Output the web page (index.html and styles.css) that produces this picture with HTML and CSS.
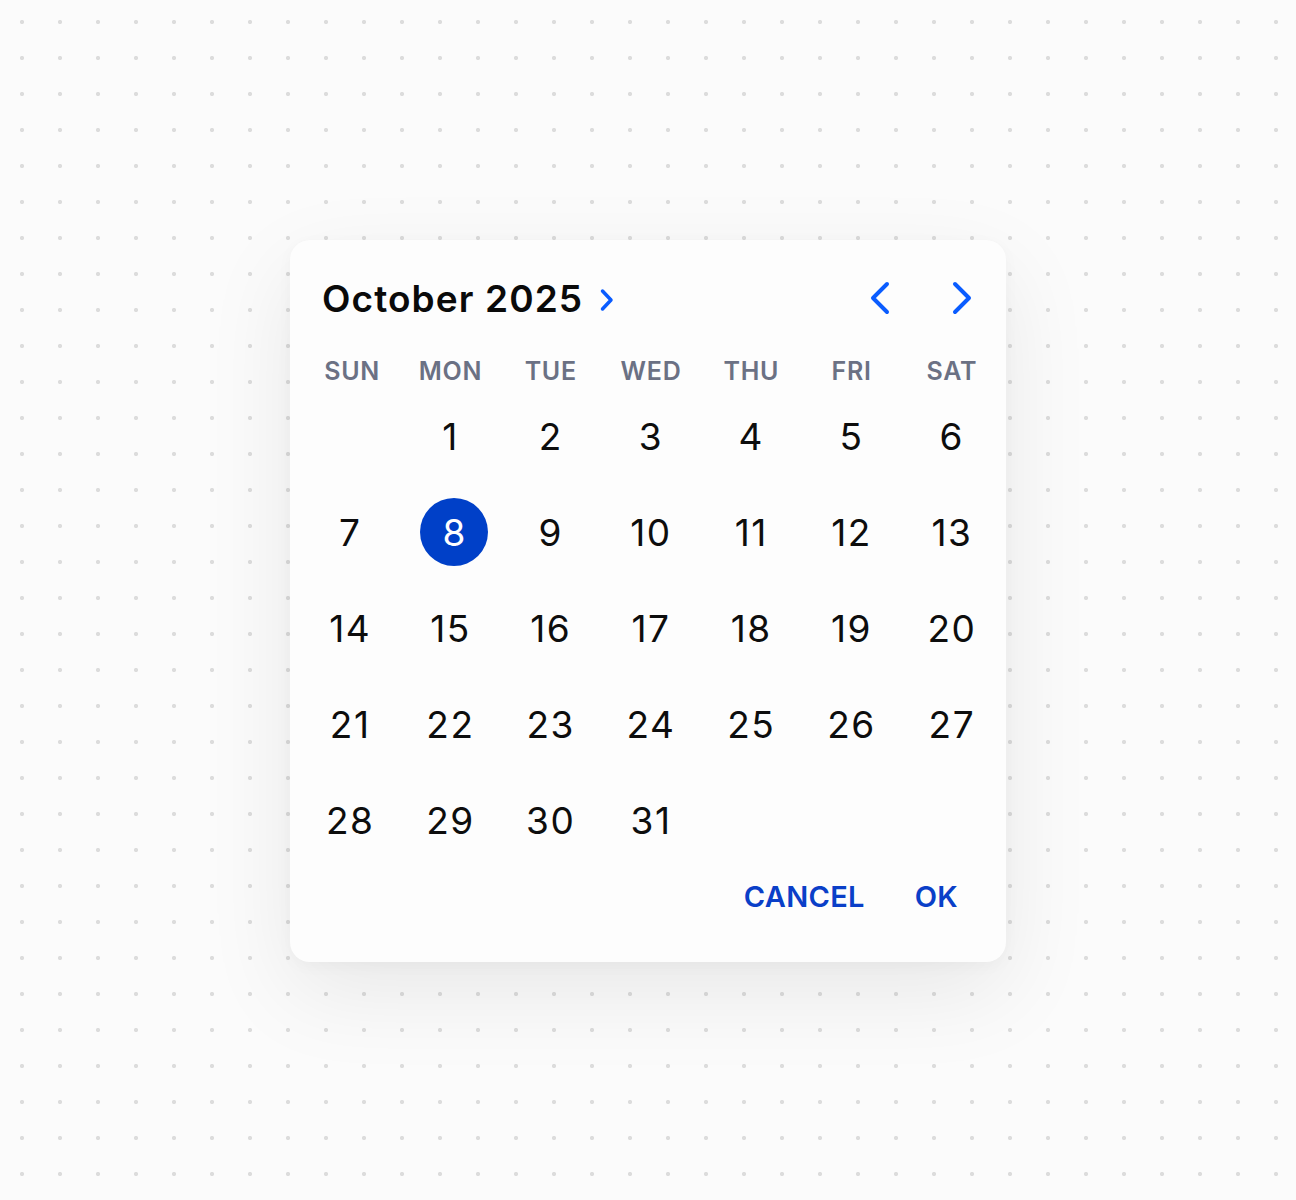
FILE: index.html
```html
<!DOCTYPE html>
<html lang="en">
<head>
    <meta charset="UTF-8">
    <meta name="viewport" content="width=device-width, initial-scale=1.0">
    <title>Date Picker</title>
    <link rel="stylesheet" href="styles.css">
</head>
<body>
    <div class="picker">
        <div class="picker-header">
            <button class="month-btn">
                <span class="month-label">October 2025</span>
                <svg class="month-chevron" width="14" height="24" viewBox="0 0 14 24">
                    <path d="M2.5 3 L11 12 L2.5 21" />
                </svg>
            </button>
            <div class="nav">
                <button class="nav-btn" aria-label="Previous month">
                    <svg width="24" height="36" viewBox="0 0 24 36">
                        <path d="M19 4 L5 18 L19 32" />
                    </svg>
                </button>
                <button class="nav-btn" aria-label="Next month">
                    <svg width="24" height="36" viewBox="0 0 24 36">
                        <path d="M5 4 L19 18 L5 32" />
                    </svg>
                </button>
            </div>
        </div>

        <div class="weekdays">
            <span>SUN</span>
            <span>MON</span>
            <span>TUE</span>
            <span>WED</span>
            <span>THU</span>
            <span>FRI</span>
            <span>SAT</span>
        </div>

        <div class="days">
            <span class="day empty"></span>
            <span class="day">1</span>
            <span class="day">2</span>
            <span class="day">3</span>
            <span class="day">4</span>
            <span class="day">5</span>
            <span class="day">6</span>
            <span class="day">7</span>
            <span class="day selected"><span class="dot">8</span></span>
            <span class="day">9</span>
            <span class="day">10</span>
            <span class="day">11</span>
            <span class="day">12</span>
            <span class="day">13</span>
            <span class="day">14</span>
            <span class="day">15</span>
            <span class="day">16</span>
            <span class="day">17</span>
            <span class="day">18</span>
            <span class="day">19</span>
            <span class="day">20</span>
            <span class="day">21</span>
            <span class="day">22</span>
            <span class="day">23</span>
            <span class="day">24</span>
            <span class="day">25</span>
            <span class="day">26</span>
            <span class="day">27</span>
            <span class="day">28</span>
            <span class="day">29</span>
            <span class="day">30</span>
            <span class="day">31</span>
        </div>

        <div class="actions">
            <button class="action-btn">CANCEL</button>
            <button class="action-btn">OK</button>
        </div>
    </div>
</body>
</html>
```

FILE: styles.css
```css
* {
    margin: 0;
    padding: 0;
    box-sizing: border-box;
    font-family: Inter, "Noto Sans", sans-serif;
}
body
{
    min-height: 100vh;
    padding-top: 240px;
    background-color: #fbfbfb;
    background-image: radial-gradient(circle, #dcdcdc 1.8px, transparent 2.4px);
    background-size: 38px 36px;
    background-position: 3px 4px;
}
button
{
    background: none;
    border: none;
    cursor: pointer;
}
.picker
{
    width: 716px;
    height: 722px;
    margin: 0 auto;
    background: #fdfdfd;
    border-radius: 20px;
    box-shadow: 0 30px 90px rgba(0, 0, 0, 0.08), 0 4px 16px rgba(0, 0, 0, 0.03);
    display: flex;
    flex-direction: column;
}
.picker-header
{
    display: flex;
    justify-content: space-between;
    align-items: center;
    height: 48px;
    margin-top: 34px;
    padding: 0 20px 0 32px;
}
.month-btn
{
    display: flex;
    align-items: center;
    gap: 17px;
}
.month-label
{
    font-size: 37px;
    font-weight: 600;
    color: #0a0a0a;
    letter-spacing: 1.1px;
}
.month-chevron
{
    margin-top: 4px;
}
.month-chevron path,
.nav-btn path
{
    fill: none;
    stroke: #0a5cff;
    stroke-linecap: round;
    stroke-linejoin: round;
}
.month-chevron path
{
    stroke-width: 3.5;
}
.nav
{
    display: flex;
    gap: 34px;
}
.nav-btn
{
    width: 48px;
    height: 48px;
    display: flex;
    align-items: center;
    justify-content: center;
}
.nav-btn path
{
    stroke-width: 4;
}
.weekdays, .days
{
    display: grid;
    grid-template-columns: repeat(7, 1fr);
    padding: 0 4px 0 10px;
}
.weekdays
{
    margin-top: 32px;
    height: 34px;
    align-items: center;
}
.weekdays span
{
    text-align: center;
    font-size: 25px;
    font-weight: 600;
    letter-spacing: 0.7px;
    color: #6b7184;
}
.weekdays span:first-child
{
    padding-left: 4px;
}
.days
{
    grid-auto-rows: 96px;
}
.day
{
    display: flex;
    align-items: center;
    justify-content: center;
    font-size: 37px;
    letter-spacing: 1.5px;
    color: #0d0d0d;
}
.day.selected
{
    padding-left: 7px;
    letter-spacing: 0;
}
.dot
{
    width: 68px;
    height: 68px;
    border-radius: 50%;
    background: #0040c8;
    color: #ffffff;
    display: flex;
    align-items: center;
    justify-content: center;
}
.actions
{
    display: flex;
    justify-content: flex-end;
    gap: 18px;
    height: 56px;
    padding-right: 32px;
}
.action-btn
{
    padding: 0 16px;
    font-size: 29px;
    font-weight: 600;
    letter-spacing: 0.3px;
    color: #0a3fc8;
}
```
